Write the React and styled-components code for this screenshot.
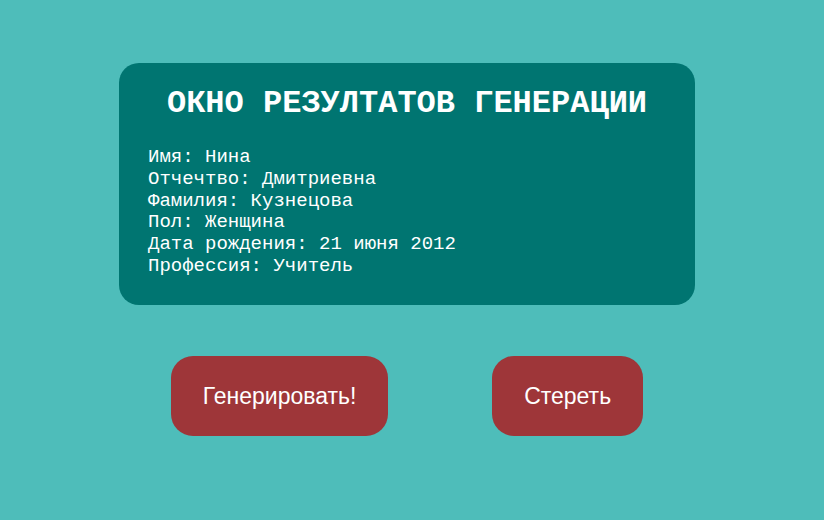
import React from "react";
import styled, { createGlobalStyle } from "styled-components";

const Global = createGlobalStyle`
  html, body { margin: 0; padding: 0; }
  body { background: #4ebdba; width: 824px; height: 520px; overflow: hidden; }
`;

const Page = styled.div`
  padding: 63px 0 0 119px;
`;

const Column = styled.div`
  width: 576px;
  display: flex;
  flex-direction: column;
  gap: 51px;
`;

const Card = styled.section`
  box-sizing: border-box;
  height: 242px;
  background: #007571;
  border-radius: 20px;
  padding: 23px 29px 0;
  color: #ffffff;
  font-family: "Liberation Mono", "Courier New", monospace;
`;

const Title = styled.h1`
  margin: 0 0 25px;
  text-align: center;
  font-size: 32px;
  line-height: 36px;
  font-weight: bold;
`;

const Line = styled.div`
  font-size: 19px;
  line-height: 21.8px;
  white-space: pre;
`;

const Buttons = styled.div`
  display: flex;
  justify-content: space-around;
`;

const Button = styled.button`
  height: 80px;
  padding: 0 32px;
  border: none;
  border-radius: 22px;
  background: #9e3639;
  color: #ffffff;
  font-family: "Liberation Sans", Arial, sans-serif;
  font-size: 23px;
  cursor: pointer;
`;

const rows = [
  "Имя: Нина",
  "Отчечтво: Дмитриевна",
  "Фамилия: Кузнецова",
  "Пол: Женщина",
  "Дата рождения: 21 июня 2012",
  "Профессия: Учитель",
];

export default function App() {
  return (
    <>
      <Global />
      <Page>
        <Column>
          <Card>
            <Title>ОКНО РЕЗУЛТАТОВ ГЕНЕРАЦИИ</Title>
            {rows.map((r) => (
              <Line key={r}>{r}</Line>
            ))}
          </Card>
          <Buttons>
            <Button>Генерировать!</Button>
            <Button>Стереть</Button>
          </Buttons>
        </Column>
      </Page>
    </>
  );
}
